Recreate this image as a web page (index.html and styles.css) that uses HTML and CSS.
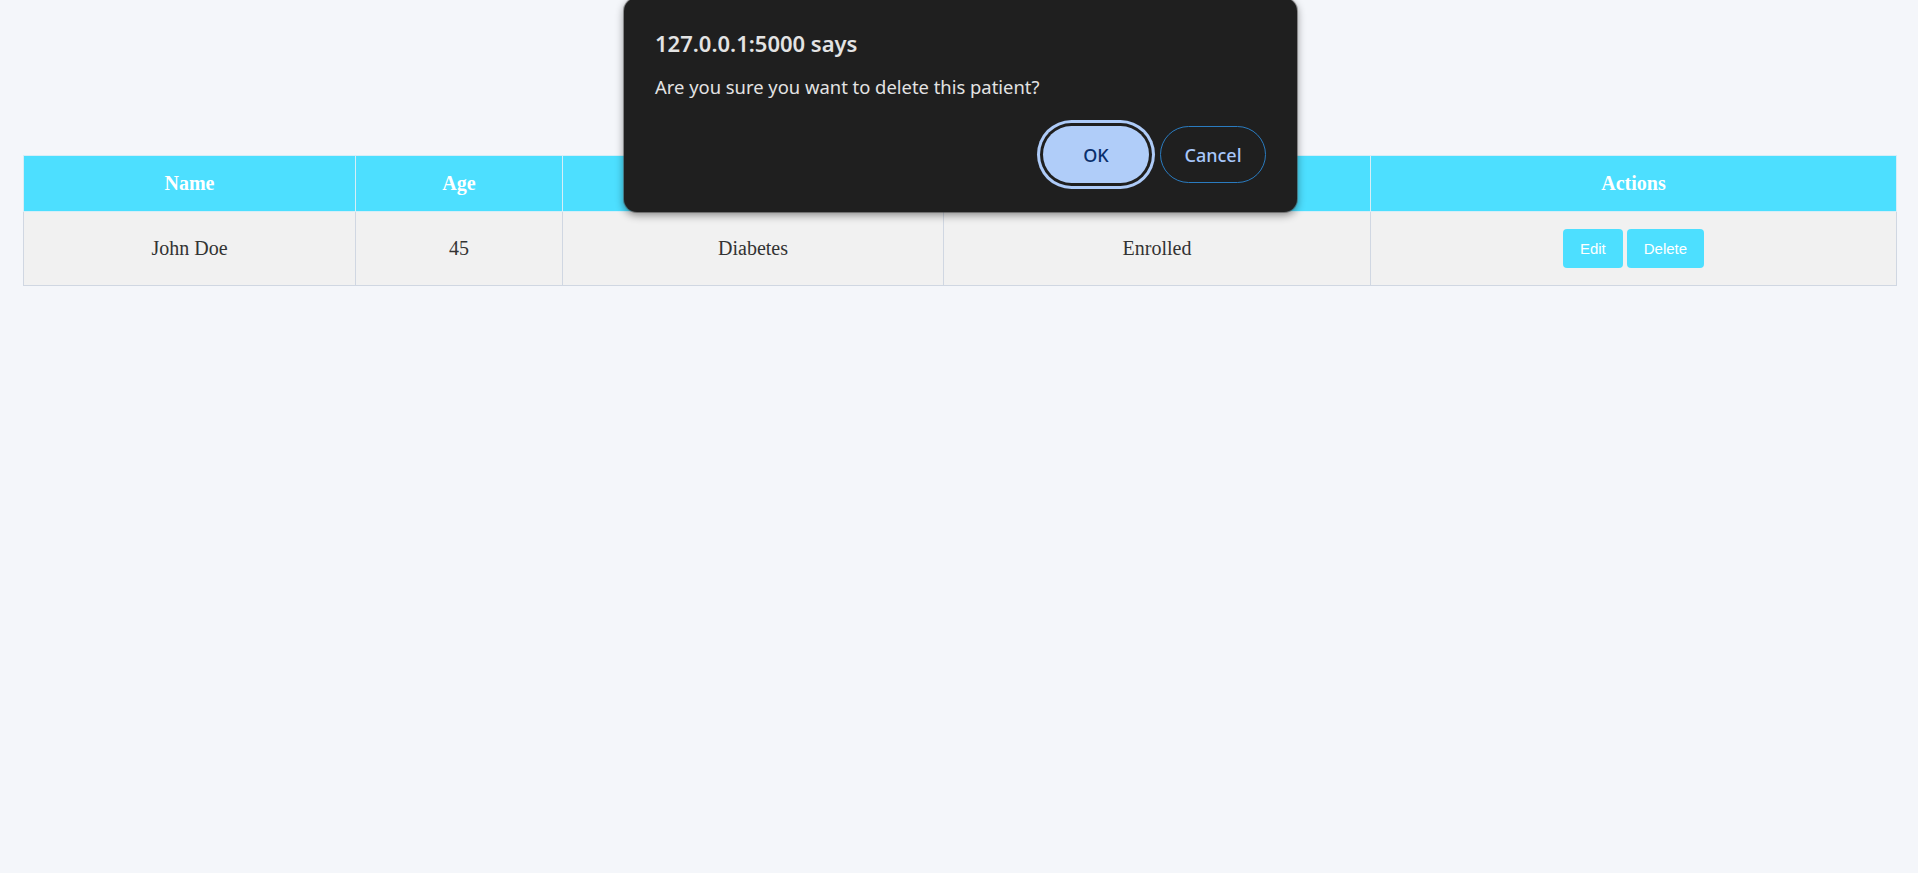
FILE: index.html
```html
<!DOCTYPE html>
<html lang="en">
<head>
<meta charset="utf-8">
<title>Patients</title>
<link rel="stylesheet" href="styles.css">
</head>
<body>
<main class="page">
  <table class="patients">
    <colgroup>
      <col class="c-name">
      <col class="c-age">
      <col class="c-cond">
      <col class="c-status">
      <col>
    </colgroup>
    <thead>
      <tr>
        <th>Name</th>
        <th>Age</th>
        <th>Condition</th>
        <th>Status</th>
        <th>Actions</th>
      </tr>
    </thead>
    <tbody>
      <tr>
        <td>John Doe</td>
        <td>45</td>
        <td>Diabetes</td>
        <td>Enrolled</td>
        <td>
          <div class="actions">
            <button class="btn">Edit</button>
            <button class="btn">Delete</button>
          </div>
        </td>
      </tr>
    </tbody>
  </table>
</main>

<div class="dialog" role="alertdialog">
  <div class="dialog-title">127.0.0.1:5000 says</div>
  <div class="dialog-msg">Are you sure you want to delete this patient?</div>
  <div class="dialog-buttons">
    <button class="dbtn dbtn-ok">OK</button>
    <button class="dbtn dbtn-cancel">Cancel</button>
  </div>
</div>
</body>
</html>
```
FILE: styles.css
```css
html, body {
  margin: 0;
  padding: 0;
}
body {
  background: #f4f6fa;
  font-family: Georgia, "Liberation Serif", serif;
  color: #333;
  height: 873px;
  overflow: hidden;
}
.page {
  padding: 155px 21px 40px 23px;
}
.patients {
  width: 100%;
  border-collapse: collapse;
  table-layout: fixed;
  border: 1px solid #d0d7e2;
  font-size: 20px;
}
.c-name { width: 332px; }
.c-age { width: 207px; }
.c-cond { width: 381px; }
.c-status { width: 427px; }

.patients th {
  background: #4ddfff;
  color: #fff;
  font-weight: bold;
  padding: 16px 10px;
  line-height: 23px;
  border: 1px solid #d6eef7;
  text-align: center;
}
.patients td {
  background: #f1f1f1;
  padding: 17px 10px;
  line-height: 23px;
  border: 1px solid #d0d7e2;
  text-align: center;
  color: #333;
}
.actions {
  display: flex;
  justify-content: center;
  gap: 4px;
}
.btn {
  font-family: "Liberation Sans", Arial, sans-serif;
  font-size: 15px;
  line-height: 17px;
  padding: 11px 17px;
  border: none;
  border-radius: 4px;
  background: #4ddfff;
  color: #fff;
}

/* browser confirm dialog */
.dialog {
  position: absolute;
  top: -2px;
  left: 624px;
  width: 673px;
  box-sizing: border-box;
  padding: 30px 31px 29px;
  background: #1f1f1f;
  border-radius: 13px;
  box-shadow: 0 3px 8px rgba(0, 0, 0, 0.45), 0 0 0 1px rgba(90, 90, 90, 0.5);
  font-family: "Noto Sans", "Open Sans", sans-serif;
  color: #e3e3e3;
}
.dialog-title {
  font-size: 22px;
  font-weight: 600;
  line-height: 30px;
}
.dialog-msg {
  margin-top: 16px;
  font-size: 18.4px;
  line-height: 25px;
}
.dialog-buttons {
  margin-top: 27px;
  display: flex;
  justify-content: flex-end;
  gap: 11px;
}
.dbtn {
  box-sizing: border-box;
  min-width: 106px;
  height: 57px;
  padding: 0 22px;
  border-radius: 29px;
  font-family: "Noto Sans", "Open Sans", sans-serif;
  font-size: 18px;
  font-weight: 500;
}
.dbtn-ok {
  background: #b0cdf9;
  color: #0a2f6c;
  border: none;
  box-shadow: 0 0 0 3px #1f1f1f, 0 0 0 6px #aecbf8;
}
.dbtn-cancel {
  background: transparent;
  color: #a8c7fa;
  border: 1.5px solid #2a7bbf;
}
```
